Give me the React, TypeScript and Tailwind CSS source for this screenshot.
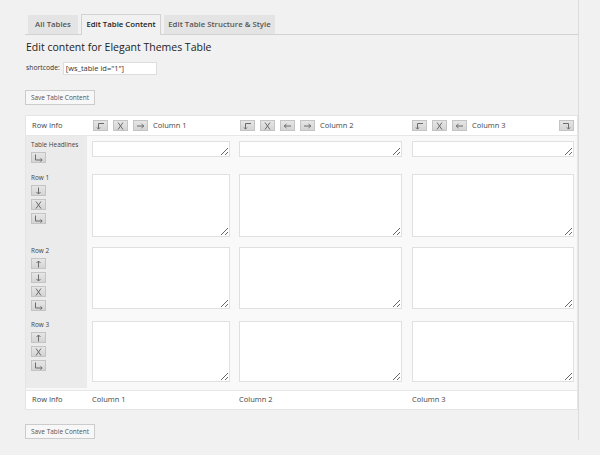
import React from 'react';

type IconName = 'colBefore' | 'colAfter' | 'x' | 'left' | 'right' | 'up' | 'down' | 'rowAfter';

function Icon({ name }: { name: IconName }) {
  const p = { stroke: '#6b6b6b', strokeWidth: 1, fill: 'none' };
  return (
    <svg width="11" height="8" viewBox="0 0 11 8">
      {name === 'colBefore' && (
        <g {...p}>
          <path d="M9 1.5H3.5V7" />
          <path d="M2 5.5l1.5 1.6L5 5.5" />
        </g>
      )}
      {name === 'colAfter' && (
        <g {...p}>
          <path d="M2 1.5h5.5V7" />
          <path d="M6 5.5l1.5 1.6L9 5.5" />
        </g>
      )}
      {name === 'x' && (
        <g {...p}>
          <path d="M3 0.5l5 7M8 0.5l-5 7" />
        </g>
      )}
      {name === 'right' && (
        <g {...p}>
          <path d="M2 4h7M6.5 2l2.3 2-2.3 2" />
        </g>
      )}
      {name === 'left' && (
        <g {...p}>
          <path d="M2 4h7M4.5 2L2.2 4l2.3 2" />
        </g>
      )}
      {name === 'up' && (
        <g {...p}>
          <path d="M5.5 7.5V1M3.5 3l2-2 2 2" />
        </g>
      )}
      {name === 'down' && (
        <g {...p}>
          <path d="M5.5 0.5V7M3.5 5l2 2 2-2" />
        </g>
      )}
      {name === 'rowAfter' && (
        <g {...p}>
          <path d="M2.5 0.5V6H9" />
          <path d="M7.5 4.5L9.2 6 7.5 7.5" />
        </g>
      )}
    </svg>
  );
}

function Btn({ icon }: { icon: IconName }) {
  return (
    <span className="flex h-[11px] w-[15px] items-center justify-center border border-[#c4c4c4] bg-gradient-to-b from-[#e6e6e6] to-[#d4d4d4]">
      <Icon name={icon} />
    </span>
  );
}

function Area({ h, w }: { h: string; w: string }) {
  return <textarea className={`block resize-y border border-[#e0e0e0] bg-white ${h} ${w}`} />;
}

const rows = [
  { label: 'Table Headlines', icons: ['rowAfter'] as IconName[], h: 'h-[33px]', ta: 'h-[16px]' },
  { label: 'Row 1', icons: ['down', 'x', 'rowAfter'] as IconName[], h: 'h-[73px]', ta: 'h-[63px]' },
  { label: 'Row 2', icons: ['up', 'down', 'x', 'rowAfter'] as IconName[], h: 'h-[74px]', ta: 'h-[62px]' },
  { label: 'Row 3', icons: ['up', 'x', 'rowAfter'] as IconName[], h: 'h-[72px]', ta: 'h-[61px]' },
];

const grid = 'grid grid-cols-[61px_148px_172px_172px]';

export default function App() {
  return (
    <div className="h-[455px] w-[600px] bg-[#f1f1f1] text-[#444]" style={{ fontFamily: '"Open Sans", "Liberation Sans", sans-serif' }}>
      <div className="ml-[25px] mr-[21px] h-[440px] border-r border-[#dcdcdc] pt-[14px]">
        {/* Tabs */}
        <div className="flex items-end gap-[3px] border-b border-[#d2d2d2] pl-[3px]">
          <div className="flex h-[19px] w-[50px] items-center justify-center bg-[#e4e4e4] text-[7.8px] font-semibold text-[#555]">All Tables</div>
          <div className="-mb-px flex h-[21px] w-[80px] items-center justify-center border border-b-0 border-[#d2d2d2] bg-[#f1f1f1] text-[7.8px] font-semibold text-[#222]">Edit Table Content</div>
          <div className="flex h-[19px] w-[111px] items-center justify-center bg-[#e4e4e4] text-[7.8px] font-semibold text-[#555]">Edit Table Structure &amp; Style</div>
        </div>

        <h2 className="mt-[2px] pl-[1px] text-[10.5px] leading-[20px] text-[#222]">Edit content for Elegant Themes Table</h2>

        <div className="mt-[5px] flex items-center gap-[3px] pl-[1px] text-[6.8px] text-[#333]">
          <span>shortcode:</span>
          <span className="flex h-[13px] w-[94px] items-center border border-[#ddd] bg-white px-[2px] text-[7.5px] text-[#333]">[ws_table id="1"]</span>
        </div>

        <button className="mt-[15px] flex h-[15px] w-[70px] items-center justify-center border border-[#ccc] bg-[#f7f7f7] text-[6.5px] text-[#555]">Save Table Content</button>

        {/* Table */}
        <div className="mt-[10px] w-[553px] border border-[#e5e5e5] bg-[#f9f9f9] text-[7.5px] text-[#444]">
          <div className={`${grid} h-[20px] items-center border-b border-[#e7e7e7] bg-white`}>
            <div className="pl-[6px]">Row Info</div>
            <div className="flex items-center gap-[5px] pl-[6px]">
              <Btn icon="colBefore" /><Btn icon="x" /><Btn icon="right" />
              <span>Column 1</span>
            </div>
            <div className="flex items-center gap-[5px] pl-[5px]">
              <Btn icon="colBefore" /><Btn icon="x" /><Btn icon="left" /><Btn icon="right" />
              <span>Column 2</span>
            </div>
            <div className="flex items-center gap-[5px] pl-[5px] pr-[5px]">
              <Btn icon="colBefore" /><Btn icon="x" /><Btn icon="left" />
              <span>Column 3</span>
              <span className="ml-auto"><Btn icon="colAfter" /></span>
            </div>
          </div>

          {rows.map((r) => (
            <div key={r.label} className={`${grid} ${r.h}`}>
              <div className="flex flex-col items-start gap-[3px] bg-[#ebebeb] pl-[5px] pt-[5px]">
                <span className="text-[6.4px] leading-[8px]">{r.label}</span>
                {r.icons.map((ic, i) => (
                  <Btn key={i} icon={ic} />
                ))}
              </div>
              <div className="pl-[5px] pt-[5px]"><Area h={r.ta} w="w-[138px]" /></div>
              <div className="pl-[4px] pt-[5px]"><Area h={r.ta} w="w-[163px]" /></div>
              <div className="pl-[5px] pt-[5px]"><Area h={r.ta} w="w-[162px]" /></div>
            </div>
          ))}

          <div className={`${grid} mt-[2px] h-[19px] items-center border-t border-[#e7e7e7] bg-white`}>
            <div className="pl-[6px]">Row Info</div>
            <div className="pl-[5px]">Column 1</div>
            <div className="pl-[4px]">Column 2</div>
            <div className="pl-[5px]">Column 3</div>
          </div>
        </div>

        <button className="mt-[14px] flex h-[15px] w-[70px] items-center justify-center border border-[#ccc] bg-[#f7f7f7] text-[6.5px] text-[#555]">Save Table Content</button>
      </div>
    </div>
  );
}
